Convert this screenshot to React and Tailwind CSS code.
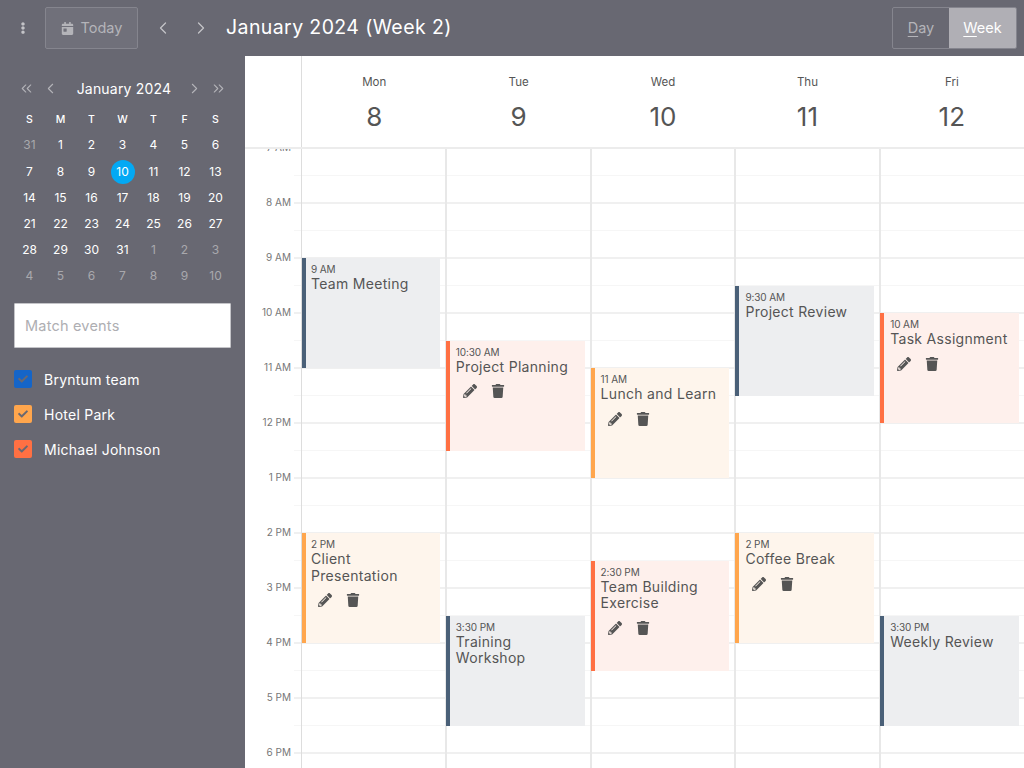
import { ChevronLeft, ChevronRight, ChevronsLeft, ChevronsRight } from "lucide-react";
import { FaCalendarDay, FaCheck, FaEllipsisV, FaPencilAlt, FaTrash } from "react-icons/fa";

const hours = ["7 AM", "8 AM", "9 AM", "10 AM", "11 AM", "12 PM", "1 PM", "2 PM", "3 PM", "4 PM", "5 PM", "6 PM"];

const weeks = [
  [31, 1, 2, 3, 4, 5, 6],
  [7, 8, 9, 10, 11, 12, 13],
  [14, 15, 16, 17, 18, 19, 20],
  [21, 22, 23, 24, 25, 26, 27],
  [28, 29, 30, 31, 1, 2, 3],
  [4, 5, 6, 7, 8, 9, 10],
];

const tones = {
  slate: "bg-[#edeef0] border-[#4a6078]",
  coral: "bg-[#fef0ec] border-[#ff7043]",
  amber: "bg-[#fef5ec] border-[#ffa64d]",
};

const days = [
  {
    name: "Mon",
    date: 8,
    events: [
      { top: 109, time: "9 AM", title: "Team Meeting", tone: "slate" },
      { top: 384, time: "2 PM", title: "Client Presentation", tone: "amber", tools: true },
    ],
  },
  {
    name: "Tue",
    date: 9,
    events: [
      { top: 191.5, time: "10:30 AM", title: "Project Planning", tone: "coral", tools: true },
      { top: 466.5, time: "3:30 PM", title: "Training Workshop", tone: "slate" },
    ],
  },
  {
    name: "Wed",
    date: 10,
    events: [
      { top: 219, time: "11 AM", title: "Lunch and Learn", tone: "amber", tools: true },
      { top: 411.5, time: "2:30 PM", title: "Team Building Exercise", tone: "coral", tools: true },
    ],
  },
  {
    name: "Thu",
    date: 11,
    events: [
      { top: 136.5, time: "9:30 AM", title: "Project Review", tone: "slate" },
      { top: 384, time: "2 PM", title: "Coffee Break", tone: "amber", tools: true },
    ],
  },
  {
    name: "Fri",
    date: 12,
    events: [
      { top: 164, time: "10 AM", title: "Task Assignment", tone: "coral", tools: true },
      { top: 466.5, time: "3:30 PM", title: "Weekly Review", tone: "slate" },
    ],
  },
];

const resources = [
  { name: "Bryntum team", color: "bg-[#1565c8]" },
  { name: "Hotel Park", color: "bg-[#ffa64d]" },
  { name: "Michael Johnson", color: "bg-[#ff7043]" },
];

function MiniCalendar() {
  return (
    <div className="mx-[14px] mt-[20px]">
      <div className="flex h-[24px] items-center text-[#b4b4b9]">
        <ChevronsLeft size={17} strokeWidth={1.5} className="ml-[4px]" />
        <ChevronLeft size={17} strokeWidth={1.5} className="ml-[7px]" />
        <span className="flex-1 pl-[3px] text-center text-[14px] tracking-[0.2px] text-white">January 2024</span>
        <ChevronRight size={17} strokeWidth={1.5} className="mr-[7px]" />
        <ChevronsRight size={17} strokeWidth={1.5} className="mr-[4px]" />
      </div>
      <div className="mt-[8px] grid grid-cols-7 text-center text-[10.5px] font-medium leading-[24.4px] text-white">
        {["S", "M", "T", "W", "T", "F", "S"].map((d, i) => (
          <div key={i}>{d}</div>
        ))}
      </div>
      <div className="grid grid-cols-7 text-center text-[12px] leading-[26.2px] text-white">
        {weeks.map((week, w) =>
          week.map((d, i) => {
            const muted = (w === 0 && d > 20) || (w >= 4 && d < 20);
            return (
              <div key={`${w}-${i}`} className={`flex h-[26.2px] items-center justify-center ${muted ? "text-[#a8a8ad]" : ""}`}>
                {d === 10 && w === 1 ? (
                  <span className="flex h-[24px] w-[24px] items-center justify-center rounded-full bg-[#03a9f4]">{d}</span>
                ) : (
                  d
                )}
              </div>
            );
          })
        )}
      </div>
    </div>
  );
}

function Sidebar() {
  return (
    <aside className="w-[245px] shrink-0 bg-[#686872]">
      <MiniCalendar />
      <div className="mx-[14px] mt-[13.4px] flex h-[45px] items-center rounded-[1px] border border-[#c4c4c8] bg-white px-[10px] text-[14.5px] tracking-[0.2px] text-[#aeaeb2]">
        Match events
      </div>
      <div className="mx-[14px] mt-[14px] flex flex-col">
        {resources.map((r) => (
          <div key={r.name} className="flex h-[35px] items-center text-[14px] tracking-[0.25px] text-white">
            <span className={`mr-[12px] flex h-[18px] w-[18px] items-center justify-center rounded-[2px] ${r.color}`}>
              <FaCheck size={10} className="text-[#686872]" />
            </span>
            {r.name}
          </div>
        ))}
      </div>
    </aside>
  );
}

function EventCard({ event, first }) {
  return (
    <div
      className={`absolute h-[110px] border-l-4 pr-1 pt-[5px] text-[#555] ${first ? "left-0 pl-[5px]" : "-left-[1px] pl-[6px]"} right-[5px] ${tones[event.tone]}`}
      style={{ top: event.top }}
    >
      <div className="text-[10px] leading-[12px] tracking-[-0.1px]">{event.time}</div>
      <div className="mt-[1px] text-[14px] leading-[16.5px] tracking-[0.3px]">{event.title}</div>
      {event.tools && (
        <div className="mt-[9px] flex items-center gap-[14px] pl-[7px]">
          <FaPencilAlt size={14} />
          <FaTrash size={14} />
        </div>
      )}
    </div>
  );
}

function Slot() {
  return (
    <div className="h-[55px] border-b-2 border-[#f0f0f0]">
      <div className="h-[27px] border-b border-[#f6f6f6]" />
    </div>
  );
}

export default function App() {
  return (
    <div className="flex h-screen w-full flex-col overflow-hidden bg-white font-['Inter',sans-serif]">
      <header className="flex h-[56px] shrink-0 items-center bg-[#686872] pl-[17px] pr-[7px] text-white">
        <FaEllipsisV size={12} className="text-[#c4c4c8]" />
        <div className="ml-[16px] flex h-[42px] w-[93px] items-center justify-center gap-[7px] rounded-[2px] border border-[#85858e] bg-[#70707a] text-[14.5px] text-[#b4b4b9]">
          <FaCalendarDay size={13} />
          Today
        </div>
        <ChevronLeft size={20} strokeWidth={1.5} className="ml-[15px] text-[#c4c4c8]" />
        <ChevronRight size={20} strokeWidth={1.5} className="ml-[18px] text-[#c4c4c8]" />
        <h1 className="ml-[15px] text-[19.5px] font-normal tracking-[0.4px]">January 2024 (Week 2)</h1>
        <div className="ml-auto flex h-[42px] w-[125px] overflow-hidden rounded-[2px] border border-[#85858e] text-[14.5px]">
          <div className="flex w-[56px] items-center justify-center text-[#b4b4b9]">
            <span><u className="underline-offset-[3px]">D</u>ay</span>
          </div>
          <div className="flex flex-1 items-center justify-center bg-[#b0afb5] text-white">
            <span><u className="underline-offset-[3px]">W</u>eek</span>
          </div>
        </div>
      </header>
      <div className="flex min-h-0 flex-1">
        <Sidebar />
        <main className="flex min-w-0 flex-1 flex-col">
          <div className="relative z-10 flex h-[93px] shrink-0 border-b-2 border-[#ececec] bg-white">
            <div className="w-[57px] shrink-0 border-r border-[#dddddd]" />
            {days.map((day) => (
              <div key={day.name} className="flex flex-1 flex-col items-center text-[#555]">
                <span className="mt-[19px] text-[11.5px] leading-[14px]">{day.name}</span>
                <span className="mt-[12px] text-[26px] leading-[32px]">{day.date}</span>
              </div>
            ))}
          </div>
          <div className="flex min-h-0 flex-1 overflow-hidden">
            <div className="w-[56px] shrink-0">
              {hours.map((h) => (
                <div key={h} className="relative h-[55px]">
                  <span className="absolute -top-[8px] right-[10px] text-[10px] leading-[12px] text-[#777]">{h}</span>
                  <div className="ml-[49px]">
                    <Slot />
                  </div>
                </div>
              ))}
            </div>
            {days.map((day, i) => (
              <div
                key={day.name}
                className={`relative flex-1 ${i === 0 ? "border-l border-[#dddddd]" : "border-l-2 border-[#e8e8e8]"}`}
              >
                {hours.map((h) => (
                  <Slot key={h} />
                ))}
                {day.events.map((event) => (
                  <EventCard key={event.title} event={event} first={i === 0} />
                ))}
              </div>
            ))}
          </div>
        </main>
      </div>
    </div>
  );
}
